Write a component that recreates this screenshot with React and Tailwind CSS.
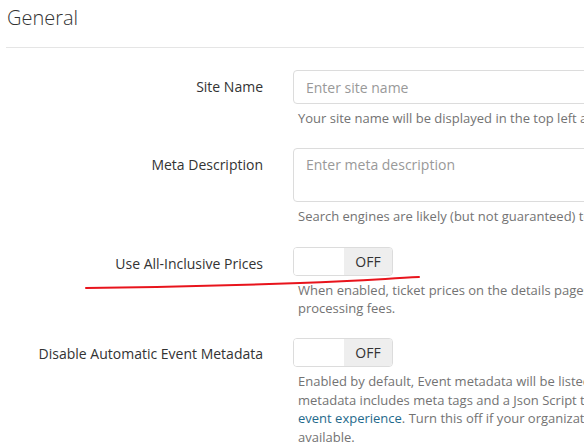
import React from "react";

const font = { fontFamily: '"Open Sans", "Noto Sans", sans-serif' };

function Label({ children, pt = "pt-[7px]" }) {
  return (
    <div className={`w-[278px] shrink-0 pr-[15px] text-right text-[14px] leading-[20px] text-[#333] ${pt}`}>
      {children}
    </div>
  );
}

function Help({ lines, mt = "mt-[5px]", leading = "leading-[18.5px]" }) {
  return (
    <div className={`${mt} pl-[5px] text-[13px] ${leading} text-[#737373]`}>
      {lines.map((l, i) => (
        <div key={i} className="whitespace-nowrap">{l}</div>
      ))}
    </div>
  );
}

function Toggle() {
  return (
    <div className="flex h-[29px] w-[100px] overflow-hidden rounded-[4px] border border-[#dcdcdc]">
      <div className="w-[50px] bg-white" />
      <div className="flex flex-1 items-center justify-center bg-[#eeeeee] text-[14px] text-[#333]">OFF</div>
    </div>
  );
}

export default function App() {
  return (
    <div className="relative h-[447px] w-[584px] overflow-hidden bg-white" style={font}>
      <div className="pl-[7px] pt-[7px] text-[20px] font-light leading-[22px] text-[#333]">General</div>
      <div className="ml-[6px] mt-[18px] border-t border-[#e5e5e5]" />

      <div className="mt-[22px] flex">
        <Label>Site Name</Label>
        <div className="min-w-0 flex-1 pl-[15px]">
          <div className="flex h-[34px] w-[400px] items-center rounded-[4px] border border-[#dcdcdc] px-[12px] text-[14px] text-[#999]">
            Enter site name
          </div>
          <Help lines={["Your site name will be displayed in the top left and in the title of your pages"]} />
        </div>
      </div>

      <div className="mt-[20px] flex">
        <Label>Meta Description</Label>
        <div className="min-w-0 flex-1 pl-[15px]">
          <div className="h-[54px] w-[400px] rounded-[4px] border border-[#dcdcdc] px-[12px] pt-[6px] text-[14px] leading-[20px] text-[#999]">
            Enter meta description
          </div>
          <Help lines={["Search engines are likely (but not guaranteed) to use this description"]} />
        </div>
      </div>

      <div className="mt-[22px] flex">
        <Label>Use All-Inclusive Prices</Label>
        <div className="min-w-0 flex-1 pl-[15px]">
          <Toggle />
          <Help
            mt="mt-[6px]"
            leading="leading-[17.5px]"
            lines={[
              "When enabled, ticket prices on the details pages will include all service and",
              "processing fees.",
            ]}
          />
        </div>
      </div>

      <div className="mt-[21px] flex">
        <Label pt="pt-[6px]">Disable Automatic Event Metadata</Label>
        <div className="min-w-0 flex-1 pl-[15px]">
          <Toggle />
          <Help
            mt="mt-[5px]"
            lines={[
              "Enabled by default, Event metadata will be listed on each event page. This",
              "metadata includes meta tags and a Json Script to enhance the",
              <span key="l">
                <span className="text-[#1f6a8c]">event experience</span>. Turn this off if your organization already has this
              </span>,
              "available.",
            ]}
          />
        </div>
      </div>

      <svg className="pointer-events-none absolute left-0 top-0" width="584" height="447">
        <path
          d="M86 288 C 160 287, 240 285, 300 283 S 380 279, 419 277"
          fill="none"
          stroke="#e8141c"
          strokeWidth="2"
          strokeLinecap="round"
        />
      </svg>
    </div>
  );
}
